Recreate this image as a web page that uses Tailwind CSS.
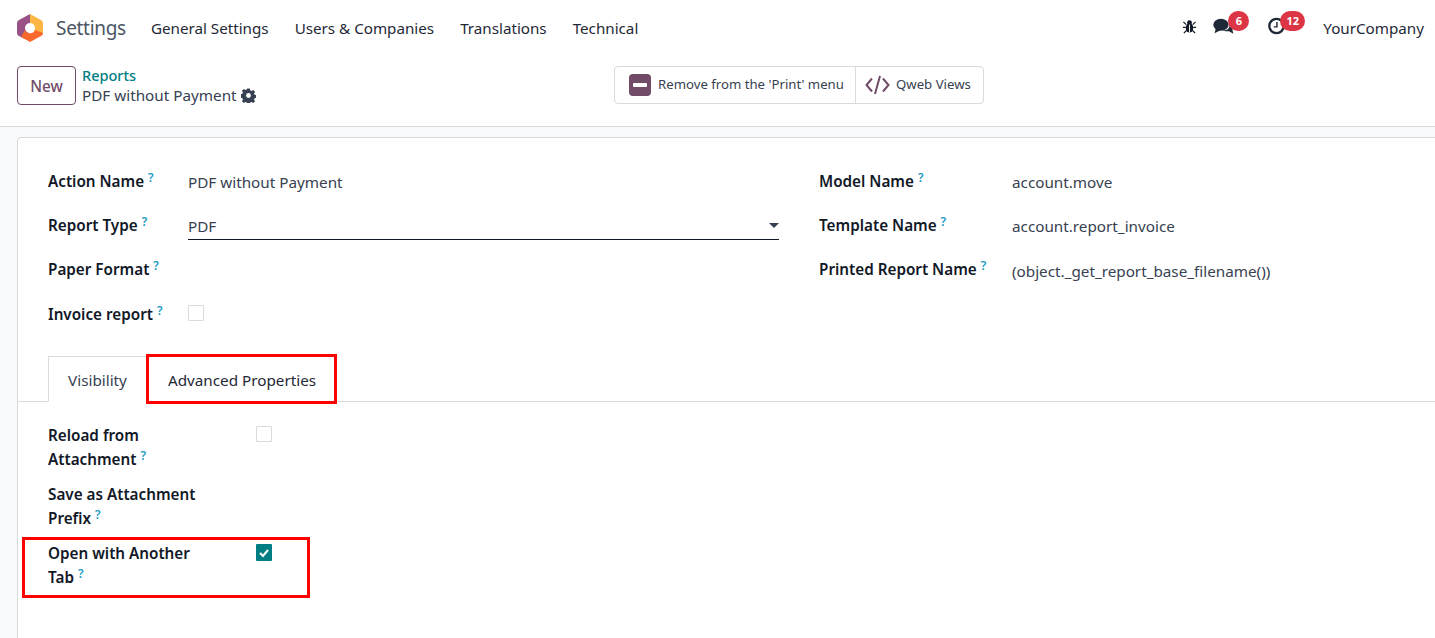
<!DOCTYPE html>
<html lang="en">
<head>
<meta charset="UTF-8">
<title>Settings</title>
<script src="https://cdn.jsdelivr.net/npm/@tailwindcss/browser@4"></script>
</head>
<body class="bg-white text-[#1f2937] font-['Noto_Sans',sans-serif] text-[15.25px] overflow-hidden">
<div class="h-[638px] flex flex-col overflow-hidden">

  <!-- Top nav -->
  <nav class="h-[56px] shrink-0 flex items-center pl-[17px] pr-[11px]">
    <svg class="w-[26px] h-[28px] shrink-0 -mt-[1px]" viewBox="0 0 26 28">
      <path d="M13 0 L2 6 Q0 7 0 9 V19 Q0 21 2 22 L8 25 L13 14Z" fill="#985184"/>
      <path d="M13 0 L24 6 Q26 7 26 9 V19 Q26 21 24 22 L13 14Z" fill="#FDB645"/>
      <path d="M4 23 L13 28 L24 22 Q26 21 26 19 L18 16 A5.5 5.5 0 0 1 8 16 Z" fill="#F9692D"/>
      <circle cx="13" cy="14" r="5" fill="#fff"/>
    </svg>
    <span class="ml-[13px] text-[19px] tracking-[-0.3px] text-[#4b5563]">Settings</span>
    <div class="ml-[25px] flex gap-[26px] text-[15.2px] text-[#1f2937]">
      <span>General Settings</span><span>Users &amp; Companies</span><span>Translations</span><span>Technical</span>
    </div>
    <div class="ml-auto flex items-center">
      <svg class="w-[15px] h-[15px] -mt-[2px]" viewBox="0 0 16 16" fill="#111827">
        <ellipse cx="8" cy="9.5" rx="4" ry="5"/><circle cx="8" cy="4" r="2.6"/>
        <path d="M1.5 3 L4.5 6 M14.5 3 L11.5 6 M1 9 H4 M15 9 H12 M2 15 L5 12 M14 15 L11 12" stroke="#111827" stroke-width="1.3"/>
        <path d="M8 6 V14.5" stroke="#fff" stroke-width="1"/>
      </svg>
      <div class="relative ml-[16px] w-[21px] h-[17px] mb-[3px]">
        <svg class="w-[21px] h-[17px]" viewBox="0 0 24 20" fill="#1f2937">
          <ellipse cx="9" cy="8" rx="9" ry="7"/><path d="M3 12 L1.5 18 L9 14Z"/>
          <path d="M19 7 C23 8 24 11 22.5 13.5 L23.5 18.5 L18.5 15.5 C15 16 12.5 15.5 11 14.5 C16 15 20 12 19 7Z"/>
        </svg>
        <span class="absolute left-[15px] top-[-7px] w-[21px] h-[20px] rounded-full bg-[#dc3545] text-white text-[11px] font-bold flex items-center justify-center">6</span>
      </div>
      <div class="relative ml-[33px] w-[19px] h-[18px] mb-[3px]">
        <svg class="w-[19px] h-[18px]" viewBox="0 0 20 20" fill="none">
          <circle cx="10" cy="10" r="8" stroke="#1f2937" stroke-width="2.6"/>
          <path d="M10.5 5.5 V11 H7" stroke="#1f2937" stroke-width="1.6"/>
        </svg>
        <span class="absolute left-[13px] top-[-6px] w-[25px] h-[20px] rounded-full bg-[#dc3545] text-white text-[11px] font-bold flex items-center justify-center">12</span>
      </div>
      <span class="ml-[37px] text-[15.2px]">YourCompany</span>
    </div>
  </nav>

  <!-- Control panel -->
  <div class="h-[71px] shrink-0 border-b border-[#d8dadd] relative flex pl-[17px] pt-[10px]">
    <button class="w-[59px] h-[39px] border border-[#714b67] rounded-[4px] text-[#714b67] font-medium pt-[2px]">New</button>
    <div class="ml-[6px] leading-[21px] -mt-[1px]">
      <div class="text-[#017e84] font-medium text-[14.5px]">Reports</div>
      <div class="flex items-center gap-[4px] text-[#374151] -mt-[1px]">PDF without Payment
        <svg class="w-[15px] h-[15px]" viewBox="0 0 16 16" fill="#374151">
          <path fill-rule="evenodd" d="M6.6 0.5h2.8l.4 2 1.4.6 1.8-1.1 2 2-1.1 1.8.6 1.4 2 .4v2.8l-2 .4-.6 1.4 1.1 1.8-2 2-1.8-1.1-1.4.6-.4 2H6.6l-.4-2-1.4-.6-1.8 1.1-2-2 1.1-1.8-.6-1.4-2-.4V6.6l2-.4.6-1.4L1 3l2-2 1.8 1.1 1.4-.6zM8 5.4a2.6 2.6 0 1 0 0 5.2 2.6 2.6 0 0 0 0-5.2z"/>
        </svg>
      </div>
    </div>
    <div class="absolute left-[614px] top-[10px] h-[38px] w-[370px] flex border border-[#d8dadd] rounded-[4px] text-[13.2px] text-[#374151]">
      <div class="w-[241px] flex items-center border-r border-[#d8dadd] pl-[14px]">
        <span class="w-[22px] h-[22px] rounded-[4px] bg-[#714b67] flex items-center justify-center"><span class="w-[14px] h-[4px] bg-white rounded-[1px]"></span></span>
        <span class="ml-[7px]">Remove from the 'Print' menu</span>
      </div>
      <div class="flex-1 flex items-center pl-[9px]">
        <svg class="w-[25px] h-[20px]" viewBox="0 0 25 20" fill="none" stroke="#714b67" stroke-width="2"><path d="M7 3.5 L1.5 10 L7 16.5 M18 3.5 L23.5 10 L18 16.5"/><path d="M15 1 L10 19"/></svg>
        <span class="ml-[6px]">Qweb Views</span>
      </div>
    </div>
  </div>

  <!-- Form area -->
  <div class="flex-1 bg-[#f9fafb] pl-[17px] pt-[10px]">
    <div class="bg-white border-l border-t border-[#d8dadd] rounded-tl-[4px] h-[520px] relative">
      <div class="grid grid-cols-[774px_1fr] pt-[32px]">
        <div class="pl-[30px]">
          <div class="flex h-[44px] items-start">
            <span class="w-[140px] font-semibold text-[#111827] leading-[22px]">Action Name <sup class="text-[#1a9ac4] text-[12px] font-semibold -top-[5px]">?</sup></span>
            <span class="text-[#374151] leading-[22px] pt-[1px]">PDF without Payment</span>
          </div>
          <div class="flex h-[44px] items-start">
            <span class="w-[140px] font-semibold text-[#111827] leading-[22px]">Report Type <sup class="text-[#1a9ac4] text-[12px] font-semibold -top-[5px]">?</sup></span>
            <span class="w-[591px] h-[26px] border-b border-[#111827] relative text-[#374151] leading-[22px] pt-[1px]">PDF
              <span class="absolute right-0 top-[9px] border-x-[5px] border-x-transparent border-t-[5px] border-t-[#374151]"></span>
            </span>
          </div>
          <div class="flex h-[45px] items-start">
            <span class="w-[140px] font-semibold text-[#111827] leading-[22px]">Paper Format <sup class="text-[#1a9ac4] text-[12px] font-semibold -top-[5px]">?</sup></span>
          </div>
          <div class="flex h-[44px] items-start">
            <span class="w-[140px] font-semibold text-[#111827] leading-[22px]">Invoice report <sup class="text-[#1a9ac4] text-[12px] font-semibold -top-[5px]">?</sup></span>
            <span class="w-[16px] h-[16px] border border-[#d8dadd] rounded-[1px] mt-[2px]"></span>
          </div>
        </div>
        <div class="pl-[27px]">
          <div class="flex h-[44px] items-start">
            <span class="w-[193px] font-semibold text-[#111827] leading-[22px]">Model Name <sup class="text-[#1a9ac4] text-[12px] font-semibold -top-[5px]">?</sup></span>
            <span class="text-[#374151] leading-[22px] pt-[1px]">account.move</span>
          </div>
          <div class="flex h-[44px] items-start">
            <span class="w-[193px] font-semibold text-[#111827] leading-[22px]">Template Name <sup class="text-[#1a9ac4] text-[12px] font-semibold -top-[5px]">?</sup></span>
            <span class="text-[#374151] leading-[22px] pt-[1px]">account.report_invoice</span>
          </div>
          <div class="flex h-[44px] items-start">
            <span class="w-[193px] font-semibold text-[#111827] leading-[22px]">Printed Report Name <sup class="text-[#1a9ac4] text-[12px] font-semibold -top-[5px]">?</sup></span>
            <span class="text-[#374151] leading-[22px] pt-[2px]">(object._get_report_base_filename())</span>
          </div>
        </div>
      </div>

      <!-- Tabs -->
      <div class="mt-[9px] h-[46px] border-b border-[#d8dadd] pl-[30px] flex">
        <div class="w-[99px] h-[46px] border border-[#d8dadd] border-b-white bg-white flex items-center justify-center text-[#374151] pt-[2px]">Visibility</div>
        <div class="w-[190px] h-[46px] flex items-center justify-center text-[#1f2937] pt-[2px]">Advanced Properties</div>
      </div>
      <div class="absolute left-[128px] top-[216px] w-[191px] h-[50px] border-[3px] border-[#ff0000]"></div>

      <!-- Tab content -->
      <div class="pl-[30px] pt-[21px] font-semibold text-[#111827] leading-[24px] relative">
        <div class="flex h-[59px]">
          <span class="w-[208px]">Reload from<br>Attachment <sup class="text-[#1a9ac4] text-[12px] font-semibold -top-[5px]">?</sup></span>
          <span class="w-[16px] h-[16px] border border-[#d8dadd] rounded-[1px] mt-[3px]"></span>
        </div>
        <div class="h-[59px]">Save as Attachment<br>Prefix <sup class="text-[#1a9ac4] text-[12px] font-semibold -top-[5px]">?</sup></div>
        <div class="flex">
          <span class="w-[208px]">Open with Another<br>Tab <sup class="text-[#1a9ac4] text-[12px] font-semibold -top-[5px]">?</sup></span>
          <span class="w-[16px] h-[17px] bg-[#017e84] rounded-[1px] flex items-center justify-center mt-[3px]">
            <svg class="w-[10px] h-[10px]" viewBox="0 0 10 10" fill="none" stroke="#fff" stroke-width="2"><path d="M1 5 L4 8 L9 2"/></svg>
          </span>
        </div>
        <div class="absolute left-[4px] top-[135px] w-[288px] h-[61px] border-[3px] border-[#ff0000]"></div>
      </div>
    </div>
  </div>
</div>
</body>
</html>
